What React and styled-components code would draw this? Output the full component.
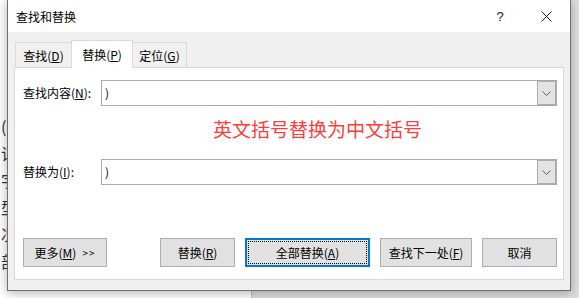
import styled, { createGlobalStyle } from "styled-components";

const GlobalStyle = createGlobalStyle`
  html, body {
    margin: 0;
    padding: 0;
    background: #ffffff;
  }
  body {
    font-family: "Noto Sans CJK SC", "Noto Sans", sans-serif;
    font-size: 12px;
    color: #000;
  }
  * {
    box-sizing: border-box;
  }
`;

const docChars = ["(", "词", "字", "型", "况", "部"];

export default function App() {
  return (
    <>
      <GlobalStyle />
      <Screen>
        <Backdrop>
          <DocPage>
            {docChars.map((c, i) => (
              <DocChar key={i}>{c}</DocChar>
            ))}
          </DocPage>
          <AppCanvas />
        </Backdrop>

        <Dialog>
          <TitleBar>
            <Title>查找和替换</Title>
            <TitleButtons>
              <HelpMark>?</HelpMark>
              <CloseMark>
                <svg width="11" height="11" viewBox="0 0 11 11">
                  <path d="M0.5 0.5 L10.5 10.5 M10.5 0.5 L0.5 10.5" stroke="#1a1a1a" strokeWidth="1" fill="none" />
                </svg>
              </CloseMark>
            </TitleButtons>
          </TitleBar>

          <Body>
            <TabRow>
              <Tab $w={57}>查找(<u>D</u>)</Tab>
              <Tab $w={62} $active>替换(<u>P</u>)</Tab>
              <Tab $w={55}>定位(<u>G</u>)</Tab>
            </TabRow>

            <Panel>
              <FieldRow>
                <Label>查找内容(<u>N</u>):</Label>
                <Combo>
                  <ComboText>)</ComboText>
                  <DropButton>
                    <Chevron />
                  </DropButton>
                </Combo>
              </FieldRow>

              <Note>英文括号替换为中文括号</Note>

              <FieldRow>
                <Label>替换为(<u>I</u>):</Label>
                <Combo>
                  <ComboText>)</ComboText>
                  <DropButton>
                    <Chevron />
                  </DropButton>
                </Combo>
              </FieldRow>

              <ButtonRow>
                <Button $w={84} $spaced>
                  更多(<u>M</u>) <Arrows>&gt;&gt;</Arrows>
                </Button>
                <Button $w={75}>替换(<u>R</u>)</Button>
                <Button $w={125} $default>全部替换(<u>A</u>)</Button>
                <Button $w={92}>查找下一处(<u>F</u>)</Button>
                <Button $w={75}>取消</Button>
              </ButtonRow>
            </Panel>
          </Body>
        </Dialog>
      </Screen>
    </>
  );
}

function Chevron() {
  return (
    <svg width="9" height="5" viewBox="0 0 9 5">
      <path d="M0.5 0.5 L4.5 4.5 L8.5 0.5" stroke="#606060" strokeWidth="1" fill="none" />
    </svg>
  );
}

const Screen = styled.div`
  position: relative;
  width: 579px;
  height: 298px;
  overflow: hidden;
`;

const Backdrop = styled.div`
  display: flex;
  height: 100%;
`;

const DocPage = styled.div`
  width: 252px;
  background: #ffffff;
  border-right: 1px solid #bdbdbd;
  display: flex;
  flex-direction: column;
  gap: 11px;
  padding-top: 118px;
  padding-left: 1px;
`;

const DocChar = styled.span`
  font-size: 16px;
  line-height: 16px;
  color: #333;
`;

const AppCanvas = styled.div`
  flex: 1;
  background: #dedede;
`;

const Dialog = styled.div`
  position: absolute;
  left: 7px;
  top: -1px;
  width: 564px;
  height: 292px;
  border: 1px solid #6f6f6f;
  background: #f0f0f0;
  display: flex;
  flex-direction: column;
  box-shadow: 0 2px 10px rgba(0, 0, 0, 0.3);
`;

const TitleBar = styled.div`
  height: 32px;
  background: #ffffff;
  display: flex;
  align-items: center;
  padding-left: 8px;
  padding-top: 1px;
`;

const Title = styled.span`
  font-size: 12px;
  line-height: 16px;
`;

const TitleButtons = styled.div`
  margin-left: auto;
  display: flex;
  align-items: center;
`;

const HelpMark = styled.span`
  font-family: "Liberation Sans", sans-serif;
  font-size: 13px;
  width: 46px;
  text-align: center;
  color: #1a1a1a;
`;

const CloseMark = styled.span`
  width: 46px;
  display: flex;
  justify-content: center;
  margin-right: 1px;
`;

const Body = styled.div`
  flex: 1;
  display: flex;
  flex-direction: column;
  padding: 8px 6px 10px 6px;
`;

const TabRow = styled.div`
  display: flex;
  align-items: flex-end;
  padding-left: 1px;
  margin-bottom: -1px;
  position: relative;
  z-index: 1;
`;

const Tab = styled.div`
  width: ${(p) => p.$w}px;
  height: ${(p) => (p.$active ? 28 : 25)}px;
  margin-bottom: ${(p) => (p.$active ? 0 : 1)}px;
  margin-left: ${(p) => (p.$active ? -1 : 0)}px;
  margin-right: ${(p) => (p.$active ? -1 : 0)}px;
  background: ${(p) => (p.$active ? "#ffffff" : "#f0f0f0")};
  border: 1px solid #d9d9d9;
  border-bottom: none;
  position: relative;
  z-index: ${(p) => (p.$active ? 2 : 1)};
  display: flex;
  align-items: center;
  justify-content: center;
  padding-top: ${(p) => (p.$active ? 0 : 2)}px;
  font-size: 12px;
  line-height: 16px;
`;

const Panel = styled.div`
  height: 213px;
  background: #ffffff;
  border: 1px solid #d9d9d9;
  display: flex;
  flex-direction: column;
  padding: 12px 6px 12px 8px;
`;

const FieldRow = styled.div`
  display: grid;
  grid-template-columns: 78px 1fr;
  align-items: center;
`;

const Label = styled.span`
  font-size: 12px;
  line-height: 16px;
`;

const Combo = styled.div`
  height: 26px;
  border: 1px solid #a9a9a9;
  background: #ffffff;
  display: flex;
  align-items: center;
`;

const ComboText = styled.span`
  flex: 1;
  padding-left: 3px;
  font-size: 12px;
  line-height: 16px;
`;

const DropButton = styled.div`
  width: 19px;
  height: 100%;
  background: #e3e3e3;
  border: 1px solid #adadad;
  display: flex;
  align-items: center;
  justify-content: center;
`;

const Note = styled.div`
  margin: 12px 0 20px 190px;
  font-size: 19px;
  line-height: 21px;
  color: #ff3d3d;
`;

const ButtonRow = styled.div`
  margin-top: auto;
  display: flex;
  gap: 10px;
`;

const Button = styled.div`
  width: ${(p) => p.$w}px;
  height: 29px;
  margin-right: ${(p) => (p.$spaced ? "auto" : "0")};
  background: #e1e1e1;
  border: ${(p) => (p.$default ? "2px solid #0078d7" : "1px solid #adadad")};
  outline: ${(p) => (p.$default ? "1px dotted #000" : "none")};
  outline-offset: -4px;
  display: flex;
  align-items: center;
  justify-content: center;
  font-size: 12px;
  line-height: 16px;
`;

const Arrows = styled.span`
  margin-left: 6px;
  font-size: 10px;
  letter-spacing: 1px;
`;
